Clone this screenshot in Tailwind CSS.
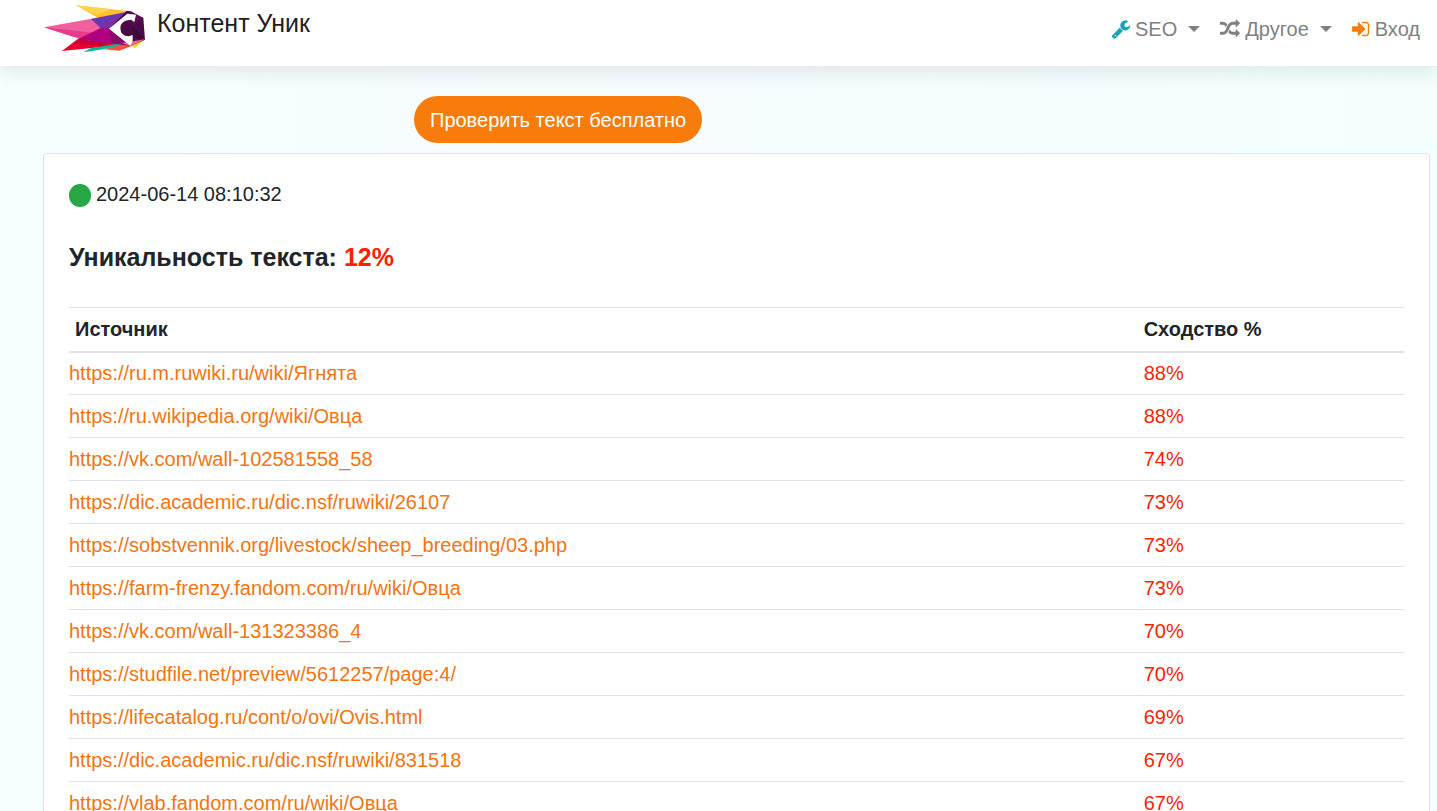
<!DOCTYPE html>
<html lang="ru">
<head>
<meta charset="utf-8">
<meta name="viewport" content="width=device-width, initial-scale=1">
<title>Контент Уник</title>
<script src="https://cdn.jsdelivr.net/npm/@tailwindcss/browser@4"></script>
</head>
<body class="h-screen overflow-hidden bg-linear-to-r from-[#f6ffff] via-[#f7fcff] via-40% to-[#f3ffff] font-['Liberation_Sans',Arial,sans-serif] text-xl/[30px] text-[#212529]">
<header class="relative flex h-[66px] items-start justify-between bg-white pl-11 pr-[17px] shadow-[0_8px_16px_rgba(0,0,0,0.08)]">
  <a href="#" class="flex items-start gap-[11px] pt-[5px] text-[25px]/9 text-[#212121]">
    <svg class="h-12 w-[102px]" viewBox="42 15 306 144" aria-hidden="true">
      <path fill="#ffbe2c" d="M138 16 300 34 205 54Z"/>
      <path fill="#ffd34a" d="M138 16 245 28 200 46Z"/>
      <path fill="#e8002f" d="M96 153 150 112 210 100 282 134Z"/>
      <path fill="#c9002e" d="M130 130 165 110 240 126 215 139Z"/>
      <path fill="#00b996" d="M160 156 182 145 320 122 300 134 182 154Z"/>
      <path fill="#f7503b" d="M222 148 300 128 314 134 268 152Z"/>
      <path fill="#d6e21f" d="M300 134 344 119 314 144Z"/>
      <path fill="#f0609f" d="M42 82 298 36 240 86 236 128 150 116Z"/>
      <path fill="#e83b8e" d="M42 82 206 100 180 122 130 110Z"/>
      <path fill="#6b37ae" d="M183 57 300 34 238 86 212 84Z"/>
      <path fill="#7d2b9f" d="M212 84 300 34 238 86 222 97Z"/>
      <path fill="#b0007f" d="M212 84 238 86 300 137 144 118Z"/>
      <path fill="#8c0a6c" d="M238 86 302 138 244 128Z"/>
      <path fill="#4b0a48" d="M290 32 302 34 340 54 345 119 302 138 238 86Z"/>
      <path fill="#5c1054" d="M300 34 340 54 306 78Z"/>
      <path fill="#3f083c" d="M306 78 344 117 312 112Z"/>
      <path fill="#f06a8a" d="M276 129 345 118 302 139Z"/>
      <path fill="#fff" d="M237 86 292 41 318 44 313 66 303 59Q272 60 271 84Q272 109 296 109L308 105V122L303 134 299 136Z"/>
    </svg>
    <span>Контент Уник</span>
  </a>
  <nav class="flex gap-5 pt-3.5 text-[#808080]">
    <button type="button" class="flex items-center">
      <svg class="mr-1 size-5 fill-[#17a2b8]" viewBox="0 0 1792 1792" aria-hidden="true"><path d="M448 1472q0-26-19-45t-45-19-45 19-19 45 19 45 45 19 45-19 19-45zm644-420l-682 682q-37 37-90 37-52 0-91-37l-106-108q-38-36-38-90 0-53 38-91l681-681q39 98 114.5 173.5t173.5 114.5zm634-435q0 39-23 106-47 134-164.5 217.5t-258.5 83.5q-185 0-316.5-131.5t-131.5-316.5 131.5-316.5 316.5-131.5q58 0 121.5 16.5t107.5 46.5q16 11 16 28t-16 28l-293 169v224l193 107q5-3 79-48.5t135.5-81 70.5-35.5q15 0 23.5 10t8.5 25z"/></svg>
      SEO
      <svg class="ml-[11px] h-1.5 w-3 fill-current" viewBox="0 0 12 6" aria-hidden="true"><path d="M0 0H12L6 6Z"/></svg>
    </button>
    <button type="button" class="flex items-center">
      <svg class="mr-[5px] size-5 fill-current" viewBox="0 0 1792 1792" aria-hidden="true"><path d="M666 481q-60 92-137 273-22-45-37-72.5t-40.5-63.5-51-56.5-63-35-81.5-14.5h-224q-14 0-23-9t-9-23v-192q0-14 9-23t23-9h224q250 0 410 225zm1126 799q0 14-9 23l-320 320q-9 9-23 9-13 0-22.5-9.5t-9.5-22.5v-192q-32 0-85 .5t-81 1-73-1-71-5-64-10.5-63-18.5-58-28.5-59-40-55-53.5-56-69.5q59-93 136-273 22 45 37 72.5t40.5 63.5 51 56.5 63 35 81.5 14.5h256v-192q0-14 9-23t23-9q12 0 24 10l319 319q9 9 9 23zm0-896q0 14-9 23l-320 320q-9 9-23 9-13 0-22.5-9.5t-9.5-22.5v-192h-256q-48 0-87 15t-69 45-51 61.5-45 77.5q-32 62-78 171-29 66-49.5 111t-54 105-64 100-74 83-90 68.5-106.5 42-128 16.5h-224q-14 0-23-9t-9-23v-192q0-14 9-23t23-9h224q48 0 87-15t69-45 51-61.5 45-77.5q32-62 78-171 29-66 49.5-111t54-105 64-100 74-83 90-68.5 106.5-42 128-16.5h256v-192q0-14 9-23t23-9q12 0 24 10l319 319q9 9 9 23z"/></svg>
      Другое
      <svg class="ml-[11px] h-1.5 w-3 fill-current" viewBox="0 0 12 6" aria-hidden="true"><path d="M0 0H12L6 6Z"/></svg>
    </button>
    <a href="#" class="flex items-center">
      <svg class="mr-[5px] h-5 w-[18px] fill-[#f87c0c]" viewBox="0 0 1600 1792" aria-hidden="true"><path d="M1184 896q0 26-19 45l-544 544q-19 19-45 19t-45-19-19-45v-288h-448q-26 0-45-19t-19-45v-384q0-26 19-45t45-19h448v-288q0-26 19-45t45-19 45 19l544 544q19 19 19 45zm352-352v704q0 119-84.5 203.5t-203.5 84.5h-320q-13 0-22.5-9.5t-9.5-22.5q0-4-1-20t-.5-26.5 3-23.5 10-19.5 20.5-6.5h320q66 0 113-47t47-113v-704q0-66-47-113t-113-47h-312l-11.5-1-11.5-3-8-5.5-7-9-2-13.5q0-4-1-20t-.5-26.5 3-23.5 10-19.5 20.5-6.5h320q119 0 203.5 84.5t84.5 203.5z"/></svg>
      Вход
    </a>
  </nav>
</header>
<main class="pl-[43px] pr-[7px] pt-[30px]">
  <a href="#" class="ml-[371px] block h-[47px] w-fit rounded-full bg-[#f87c0c] px-4 py-[9px] text-white">Проверить текст бесплатно</a>
  <section class="mt-2.5 rounded border border-[#dee2e6] bg-white px-[25px] pt-[25px] pb-6">
    <p class="flex items-center gap-[5px]"><span class="mt-0.5 h-[23px] w-[22px] rounded-full bg-[#28a745]"></span>2024-06-14 08:10:32</p>
    <h1 class="mt-[30px] text-[25px]/9 font-bold">Уникальность текста: <span class="text-[#ff1f00]">12%</span></h1>
    <table class="mt-8 w-full table-fixed border-collapse text-left">
      <thead>
        <tr class="h-11 border-t border-b-2 border-[#dee2e6]"><th scope="col" class="w-[80.5%] pl-1.5">Источник</th><th scope="col">Сходство %</th></tr>
      </thead>
      <tbody class="text-[#ff1f00] [&_a]:text-[#f57410] [&_tr]:h-[43px] [&_tr]:border-b [&_tr]:border-[#dee2e6]">
        <tr><td><a href="#">https://ru.m.ruwiki.ru/wiki/Ягнята</a></td><td>88%</td></tr>
        <tr><td><a href="#">https://ru.wikipedia.org/wiki/Овца</a></td><td>88%</td></tr>
        <tr><td><a href="#">https://vk.com/wall-102581558_58</a></td><td>74%</td></tr>
        <tr><td><a href="#">https://dic.academic.ru/dic.nsf/ruwiki/26107</a></td><td>73%</td></tr>
        <tr><td><a href="#">https://sobstvennik.org/livestock/sheep_breeding/03.php</a></td><td>73%</td></tr>
        <tr><td><a href="#">https://farm-frenzy.fandom.com/ru/wiki/Овца</a></td><td>73%</td></tr>
        <tr><td><a href="#">https://vk.com/wall-131323386_4</a></td><td>70%</td></tr>
        <tr><td><a href="#">https://studfile.net/preview/5612257/page:4/</a></td><td>70%</td></tr>
        <tr><td><a href="#">https://lifecatalog.ru/cont/o/ovi/Ovis.html</a></td><td>69%</td></tr>
        <tr><td><a href="#">https://dic.academic.ru/dic.nsf/ruwiki/831518</a></td><td>67%</td></tr>
        <tr><td><a href="#">https://vlab.fandom.com/ru/wiki/Овца</a></td><td>67%</td></tr>
      </tbody>
    </table>
  </section>
</main>
</body>
</html>
